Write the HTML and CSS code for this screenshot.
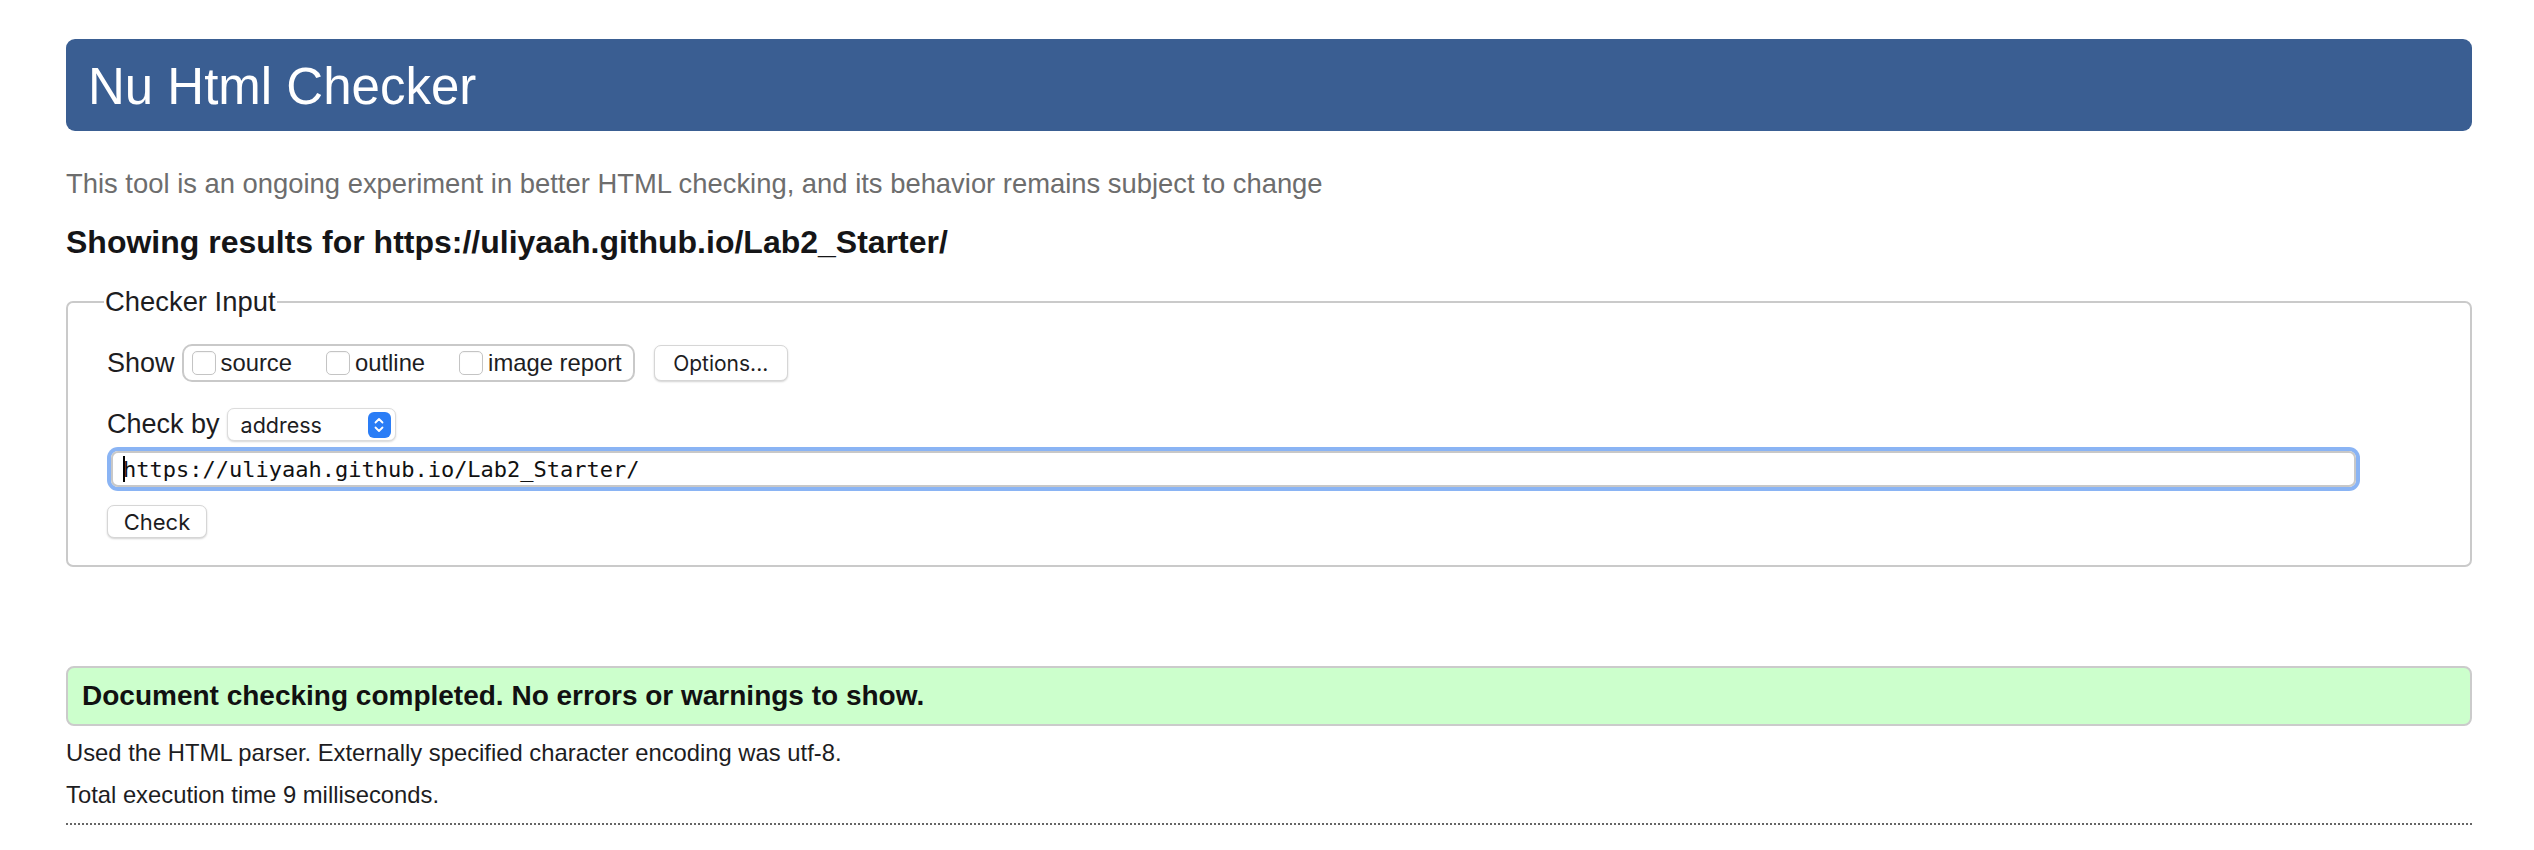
FILE: index.html
```html
<!DOCTYPE html>
<html lang="en">
<head>
<meta charset="utf-8">
<title>Nu Html Checker</title>
<link rel="stylesheet" href="styles.css">
</head>
<body>
<div class="page">
  <header class="banner"><h1 class="banner-title">Nu Html Checker</h1></header>
  <p class="tagline">This tool is an ongoing experiment in better HTML checking, and its behavior remains subject to change</p>
  <h2 class="results-for">Showing results for https://uliyaah.github.io/Lab2_Starter/</h2>
  <fieldset class="checker">
    <legend class="checker-legend">Checker Input</legend>
    <div class="row">
      <span class="row-label">Show</span>
      <div class="opts">
        <label class="opt"><span class="cb"></span>source</label>
        <label class="opt"><span class="cb"></span>outline</label>
        <label class="opt"><span class="cb"></span>image report</label>
      </div>
      <button class="btn btn-options" type="button">Options...</button>
    </div>
    <div class="row row-by">
      <span class="row-label">Check by</span>
      <div class="select">
        <span class="select-value">address</span>
        <span class="select-arrows"><svg width="14" height="20" viewBox="0 0 14 20"><path d="M3.5 7.5 L7 4 L10.5 7.5" fill="none" stroke="#fff" stroke-width="1.8" stroke-linecap="round" stroke-linejoin="round"/><path d="M3.5 12.5 L7 16 L10.5 12.5" fill="none" stroke="#fff" stroke-width="1.8" stroke-linecap="round" stroke-linejoin="round"/></svg></span>
      </div>
    </div>
    <div class="url"><span class="caret"></span>https://uliyaah.github.io/Lab2_Starter/</div>
    <button class="btn btn-check" type="submit">Check</button>
  </fieldset>
  <div class="success">Document checking completed. No errors or warnings to show.</div>
  <p class="info">Used the HTML parser. Externally specified character encoding was utf-8.</p>
  <p class="info info-2">Total execution time 9 milliseconds.</p>
  <hr class="dotted">
</div>
</body>
</html>
```

FILE: styles.css
```css
* { box-sizing: border-box; }
html, body { margin: 0; padding: 0; background: #fff; }
body {
  font-family: "Liberation Sans", Arial, Helvetica, sans-serif;
  color: #1d1d1f;
}
.page {
  padding: 39px 62px 0 66px;
}
.banner {
  height: 92px;
  background: #3a5e92;
  border-radius: 9px;
  display: flex;
  align-items: center;
  padding-left: 22px;
}
.banner-title {
  margin: 0;
  font-weight: normal;
  font-size: 51px;
  line-height: 1;
  color: #fff;
  padding-top: 2px;
}
.tagline {
  margin: 37px 0 0;
  font-size: 27.4px;
  line-height: 32px;
  color: #6d6d6d;
}
.results-for {
  margin: 24px 0 0;
  font-size: 32px;
  line-height: 36px;
  font-weight: bold;
  color: #151517;
}
.checker {
  margin: 26px 0 0;
  border: 2px solid #cacaca;
  border-radius: 7px;
  padding: 26px 40px 27px 39px;
}
.checker-legend {
  font-size: 27.4px;
  line-height: 32px;
  padding: 0 1px;
  margin-left: -3px;
  color: #1d1d1f;
}
.row {
  display: flex;
  align-items: center;
  height: 38px;
}
.row-label {
  font-size: 27px;
  margin-right: 7px;
}
.opts {
  display: flex;
  align-items: center;
  height: 38px;
  border: 2px solid #c9c9c9;
  border-radius: 10px;
  padding: 0 11px 0 8px;
}
.opt {
  display: flex;
  align-items: center;
  font-size: 23.8px;
  margin-right: 34px;
}
.opt:last-child { margin-right: 0; }
.cb {
  width: 24px;
  height: 24px;
  border: 1.5px solid #c4c4c4;
  border-radius: 5px;
  background: #fff;
  margin-right: 5px;
  box-shadow: inset 0 1px 1px rgba(0,0,0,0.04);
}
.btn {
  font-family: Inter, "Liberation Sans", sans-serif;
  font-size: 21px;
  color: #1d1d1f;
  background: #fff;
  border: 1px solid #d6d6d6;
  border-radius: 7px;
  box-shadow: 0 1px 2px rgba(0,0,0,0.18);
  padding: 0 10px;
  margin: 0;
}
.btn-options {
  height: 36px;
  width: 134px;
  margin-left: 19px;
}
.row-by {
  margin-top: 26px;
  height: 33px;
}
.select {
  height: 33px;
  width: 169px;
  display: flex;
  align-items: center;
  justify-content: space-between;
  background: #fff;
  border: 1px solid #dcdcdc;
  border-radius: 7px;
  box-shadow: 0 1px 2px rgba(0,0,0,0.16);
  padding: 0 4px 0 13px;
  font-family: Inter, "Liberation Sans", sans-serif;
  font-size: 21.5px;
}
.select-arrows {
  width: 23px;
  height: 26px;
  background: #2a7df6;
  border-radius: 6px;
  display: flex;
  align-items: center;
  justify-content: center;
}
.url {
  margin: 10px 0 0 4px;
  width: 2245px;
  height: 36px;
  border: 2px solid #c8c8c8;
  border-radius: 7px;
  box-shadow: 0 0 0 4px #8ab4f4;
  display: flex;
  align-items: center;
  padding-left: 10px;
  font-family: "DejaVu Sans Mono", "Liberation Mono", monospace;
  font-size: 22px;
  color: #111;
}
.caret {
  width: 2px;
  height: 26px;
  background: #000;
  margin-right: -2px;
}
.btn-check {
  display: block;
  margin-top: 18px;
  height: 33px;
  width: 100px;
  padding: 0;
  font-size: 22px;
}
.success {
  margin-top: 99px;
  height: 60px;
  background: #ccffcc;
  border: 2px solid #cbcbcb;
  border-radius: 8px;
  display: flex;
  align-items: center;
  padding-left: 14px;
  font-size: 28px;
  font-weight: bold;
  color: #111;
}
.info {
  margin: 10px 0 0;
  font-size: 23.8px;
  line-height: 34px;
  color: #1d1d1f;
}
.info-2 { margin-top: 8px; }
.dotted {
  margin: 11px 0 0;
  border: 0;
  border-top: 2px dotted #666;
  height: 0;
}
```
